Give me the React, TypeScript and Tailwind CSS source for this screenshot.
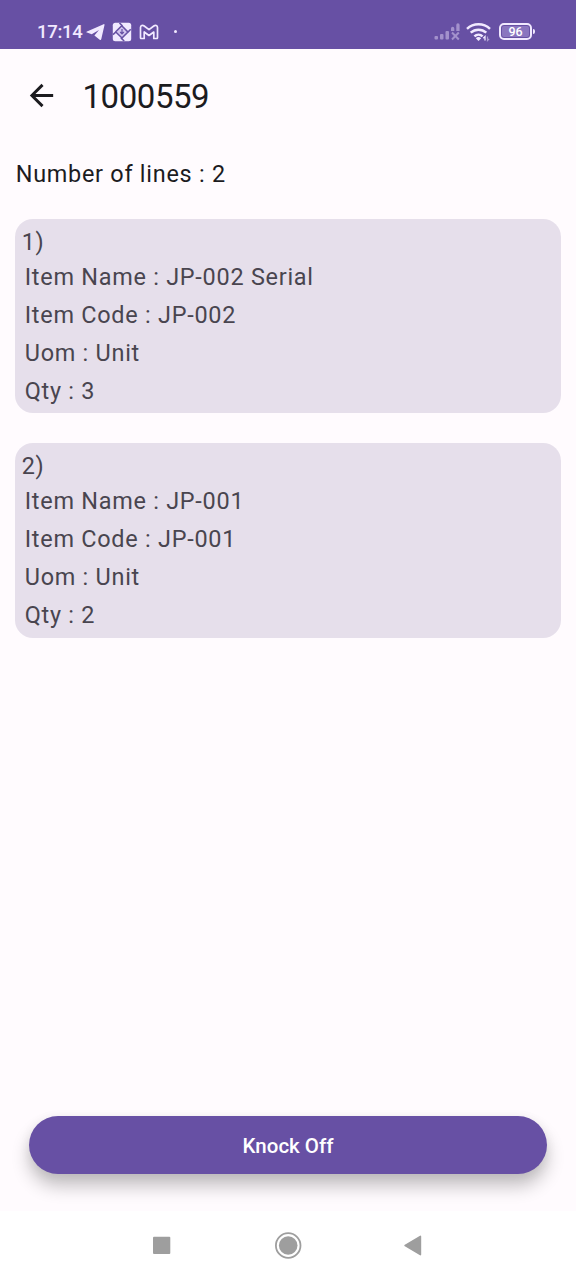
import React from "react";

interface Line {
  name: string;
  code: string;
  uom: string;
  qty: number;
}

const lines: Line[] = [
  { name: "JP-002 Serial", code: "JP-002", uom: "Unit", qty: 3 },
  { name: "JP-001", code: "JP-001", uom: "Unit", qty: 2 },
];

function StatusBar() {
  return (
    <header className="flex h-[48.5px] shrink-0 items-center bg-[#6750a4] pt-[15px] pl-[37px] pr-[41px] text-[#f1e9ff]">
      <span className="w-[47px] text-[18.5px] leading-none font-medium tracking-[-0.300px]">17:14</span>
      <svg className="ml-[2px] h-[18px] w-[19px]" viewBox="0 0 19 18" fill="currentColor">
        <path d="M17.600 1.200 1 8.400c-.8.4-.8.9 0 1.200l4.700 1.700L13 7l-4.600 5.500 5.300 4.300c.8.4 1.400.2 1.600-.7L18.500 2c.1-.8-.3-1.100-.9-.8Z" />
      </svg>
      <svg className="ml-[7px] h-[20px] w-[20px]" viewBox="0 0 20 20">
        <rect x="0.800" y="0.800" width="18.400" height="18.400" rx="2.500" fill="currentColor" />
        <path d="M10 4.500 15.500 10 10 15.500 4.500 10Z" fill="#d3c5f0" />
        <path
          d="M3.500 10 10 3.500 7.500 1M9.500 3.500l6.500 6.500 2.700-2.700M16 10l-6.500 6.500 2.700 2.500M10 16 3.800 10 1 12.700"
          fill="none"
          stroke="#6750a4"
          strokeWidth="1.600"
        />
        <path d="M10 7v4.500M8.200 10 10 11.800l1.800-1.800" fill="none" stroke="#6750a4" strokeWidth="1.200" />
      </svg>
      <svg className="ml-[7px] h-[16px] w-[20px]" viewBox="0 0 20 16" fill="none" stroke="currentColor" strokeWidth="1.700" strokeLinejoin="round">
        <path d="M1.500 13.800V3.500C1.500 1.300 3.500.7 5.200 2L10 5.700 14.800 2c1.700-1.300 3.700-.7 3.700 1.500v10.300a.7.7 0 0 1-.7.7h-3V8L10 11.500 5.200 8v6.500h-3a.7.7 0 0 1-.7-.7Z" />
      </svg>
      <span className="ml-[15px] h-[3px] w-[3px] rounded-full bg-[#f1e9ff]" />
      <svg className="ml-auto h-[18px] w-[27px]" viewBox="0 0 27 18" fill="#a391cc">
        <rect x="0.500" y="13" width="3.500" height="3.500" rx="1" />
        <rect x="6" y="11" width="3.500" height="5.500" rx="1" />
        <rect x="11.500" y="8" width="3.500" height="8.500" rx="1" />
        <path d="M17 5.500a1.500 1.500 0 0 1 3.300 0V8H17ZM22.300 2a1.500 1.500 0 0 1 3.300 0v6h-3.300Z" />
        <path d="m18 9.500 6.800 7M24.800 9.500 18 16.500" stroke="#a391cc" strokeWidth="2" />
      </svg>
      <svg className="ml-[4px] h-[20px] w-[27px]" viewBox="0 0 26 20" fill="none" stroke="currentColor" strokeWidth="2.500">
        <path d="M1.500 6.800a17 17 0 0 1 23 0M5.200 10.700a11.500 11.500 0 0 1 15.600 0M8.900 14.300a6 6 0 0 1 8.200 0" />
        <path d="m13 19-2.700-2.700a4 4 0 0 1 5.400 0Z" fill="currentColor" stroke="none" />
        <path d="M19.500 18.500v-4l-1.700 1.700" strokeWidth="1.300" />
        <path d="M22 14.500v4l1.700-1.700" strokeWidth="1.200" opacity=".5" />
      </svg>
      <div className="ml-[7px] flex h-[17px] w-[33px] items-center justify-center rounded-[5px] border-2 border-[#f1e9ff] p-[1px]">
        <span className="flex h-full w-full items-center justify-center rounded-[2px] bg-[#8a75bf] text-[12.500px] leading-none font-medium text-white">
          96
        </span>
      </div>
      <span className="ml-[1px] h-[5px] w-[2px] rounded-r-full bg-[#f1e9ff]" />
    </header>
  );
}

function LineCard({ index, line }: { index: number; line: Line }) {
  return (
    <li className="h-[194.500px] rounded-[18px] bg-[#e6dfeb] pt-[6px] text-[23.450px] tracking-[0.740px] text-[#49454f]">
      <p className="h-[33px] pl-[6.700px] leading-[35px]">{index})</p>
      <div className="pl-[9.700px] leading-[38px]">
        <p>Item Name : {line.name}</p>
        <p>Item Code : {line.code}</p>
        <p>Uom : {line.uom}</p>
        <p>Qty : {line.qty}</p>
      </div>
    </li>
  );
}

function NavBar() {
  return (
    <nav className="flex h-[69px] shrink-0 items-center justify-center bg-white text-[#9e9e9e]">
      <svg className="h-[28px] w-[28px]" viewBox="0 0 28 28" fill="currentColor">
        <rect x="5" y="4.700" width="17.300" height="17.300" rx="1" />
      </svg>
      <svg className="mx-[98.500px] h-[28px] w-[28px]" viewBox="0 0 28 28">
        <circle cx="14.200" cy="13.500" r="12.300" fill="none" stroke="currentColor" strokeWidth="1.800" />
        <circle cx="14.200" cy="13.500" r="9.300" fill="currentColor" />
      </svg>
      <svg className="h-[28px] w-[28px]" viewBox="0 0 28 28" fill="currentColor">
        <path d="M20.200 4.400v18.200a.8.8 0 0 1-1.200.7L3.800 14.300a.9.9 0 0 1 0-1.600L19 3.700a.8.8 0 0 1 1.200.7Z" />
      </svg>
    </nav>
  );
}

export default function App() {
  return (
    <div className="flex h-[1280px] w-[576px] flex-col overflow-hidden bg-[#fffbfe] font-['Roboto',sans-serif] text-[#1c1b1f]">
      <StatusBar />
      <div className="flex h-[94px] shrink-0 items-center pl-[23.500px]">
        <button aria-label="Back">
          <svg className="h-[35px] w-[35px]" viewBox="0 0 24 24" fill="currentColor">
            <path d="M20 11H7.830l5.590-5.590L12 4l-8 8 8 8 1.410-1.410L7.830 13H20v-2z" />
          </svg>
        </button>
        <h1 className="mt-[2px] ml-[24px] text-[33px] leading-[41px] tracking-[-0.450px]">1000559</h1>
      </div>
      <main className="flex flex-1 flex-col px-[15px]">
        <p className="mt-[14px] pl-[0.700px] text-[23.450px] leading-[35px] tracking-[0.730px]">
          Number of lines : {lines.length}
        </p>
        <ul className="mt-[27px] flex flex-col gap-[30px]">
          {lines.map((line, i) => (
            <LineCard key={line.code} index={i + 1} line={line} />
          ))}
        </ul>
        <button className="mx-[14px] mt-auto mb-[37px] h-[58px] rounded-full bg-[#6750a4] pt-[2px] text-[20.500px] font-medium text-white shadow-[0_12px_18px_rgba(0,0,0,0.24),0_2px_12px_rgba(0,0,0,0.06)]">
          Knock Off
        </button>
      </main>
      <NavBar />
    </div>
  );
}
